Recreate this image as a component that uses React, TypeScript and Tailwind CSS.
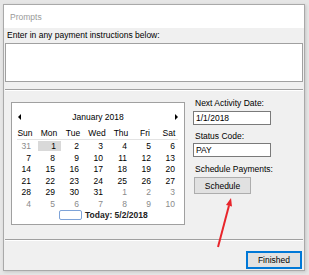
import React from "react";

type Day = { n: number; g?: boolean; sel?: boolean };

const rows: Day[][] = [
  [{ n: 31, g: true }, { n: 1, sel: true }, { n: 2 }, { n: 3 }, { n: 4 }, { n: 5 }, { n: 6 }],
  [7, 8, 9, 10, 11, 12, 13].map((n) => ({ n })),
  [14, 15, 16, 17, 18, 19, 20].map((n) => ({ n })),
  [21, 22, 23, 24, 25, 26, 27].map((n) => ({ n })),
  [{ n: 28 }, { n: 29 }, { n: 30 }, { n: 31 }, { n: 1, g: true }, { n: 2, g: true }, { n: 3, g: true }],
  [4, 5, 6, 7, 8, 9, 10].map((n) => ({ n, g: true })),
];

const rowHeights = ["h-[12px]", "h-[11px]", "h-[12px]", "h-[11px]", "h-[12px]", "h-[11px]"];

const names = ["Sun", "Mon", "Tue", "Wed", "Thu", "Fri", "Sat"];

function Calendar() {
  return (
    <div className="ml-[7px] mt-[11px] w-[174px] h-[123px] border border-[#a0a0a0] bg-white pt-[8px] flex flex-col shrink-0">
      <div className="h-[12px] flex items-center justify-between px-[6px]">
        <div className="w-0 h-0 border-y-[3px] border-y-transparent border-r-[3px] border-r-black" />
        <div>January 2018</div>
        <div className="w-0 h-0 border-y-[3px] border-y-transparent border-l-[3px] border-l-black" />
      </div>
      <div className="mt-[4px] pl-[1px] grid grid-cols-[repeat(7,24px)] h-[12px]">
        {names.map((d) => (
          <div key={d} className="text-center">
            {d}
          </div>
        ))}
      </div>
      <div className="ml-[5px] w-[161px] h-px bg-[#e3e3e3]" />
      {rows.map((r, i) => (
        <div key={i} className={`pl-[1px] grid grid-cols-[repeat(7,24px)] ${rowHeights[i]}`}>
          {r.map((d, j) => (
            <div key={j} className="flex items-center">
              {d.sel ? (
                <div className="ml-[1px] w-[23px] h-[10px] bg-[#d9d9d9] flex items-center justify-end pr-[5px]">
                  {d.n}
                </div>
              ) : (
                <div className={`w-full text-right pr-[6px] ${d.g ? "text-[#8a8a8a]" : "text-black"}`}>{d.n}</div>
              )}
            </div>
          ))}
        </div>
      ))}
      <div className="h-[12px] flex items-center pl-[47px]">
        <div className="w-[23px] h-[10px] border border-[#7ea3d8] rounded-[2px]" />
        <div className="ml-[3px] font-bold text-[#222]">Today: 5/2/2018</div>
      </div>
    </div>
  );
}

function RightPanel() {
  return (
    <div className="ml-[8px] mt-[6px] flex flex-col">
      <div className="h-[12px] ml-[2px]">Next Activity Date:</div>
      <div className="mt-[2px] w-[78px] h-[14px] border border-[#7a7a7a] bg-white pl-[2px] flex items-center">1/1/2018</div>
      <div className="mt-[5px] h-[12px] ml-[2px]">Status Code:</div>
      <div className="mt-[1px] w-[78px] h-[14px] border border-[#7a7a7a] bg-white pl-[2px] flex items-center">PAY</div>
      <div className="mt-[6px] h-[12px] ml-[2px]">Schedule Payments:</div>
      <div className="mt-[2px] ml-[1px] w-[57px] h-[17px] border border-[#adadad] bg-[#e1e1e1] flex items-center justify-center">
        Schedule
      </div>
    </div>
  );
}

export default function App() {
  return (
    <div className="relative w-[309px] h-[275px] bg-[#e6e6e6] overflow-hidden flex font-['Liberation_Sans',Arial,sans-serif] text-[8.5px] leading-[12px] text-black">
      <div className="w-[3px] shrink-0" />
      <div className="mt-[4px] w-[302px] h-[267px] border border-[#a9a9a9] bg-[#f0f0f0] flex flex-col shadow-[1px_1px_3px_rgba(0,0,0,0.15)]">
        <div className="h-[23px] bg-white pl-[6px] flex items-center text-[#9a9a9a]">Prompts</div>
        <div className="flex flex-col pt-[1px]">
          <div className="h-[12px] pl-[3px]">Enter in any payment instructions below:</div>
          <div className="mx-[1px] mt-[2px] h-[39px] border border-[#a0a0a0] bg-white" />
          <div className="mx-[1px] mt-[7px] border-t border-t-[#a0a0a0] border-b border-b-white" />
          <div className="flex">
            <Calendar />
            <RightPanel />
          </div>
          <div className="mx-[1px] mt-[14px] border-t border-t-[#a0a0a0] border-b border-b-white" />
          <div className="flex justify-end mr-[2px] mt-[10px]">
            <div className="w-[56px] h-[18px] border-2 border-[#0078d7] bg-[#e1e1e1] flex items-center justify-center">
              Finished
            </div>
          </div>
        </div>
      </div>
      <svg className="absolute left-0 top-0 pointer-events-none" width="309" height="275" viewBox="0 0 309 275">
        <line x1="218" y1="247" x2="229" y2="205.5" stroke="#e8252b" strokeWidth="2" />
        <polygon points="231,198 232,206.6 226,205" fill="#e8252b" />
      </svg>
    </div>
  );
}
